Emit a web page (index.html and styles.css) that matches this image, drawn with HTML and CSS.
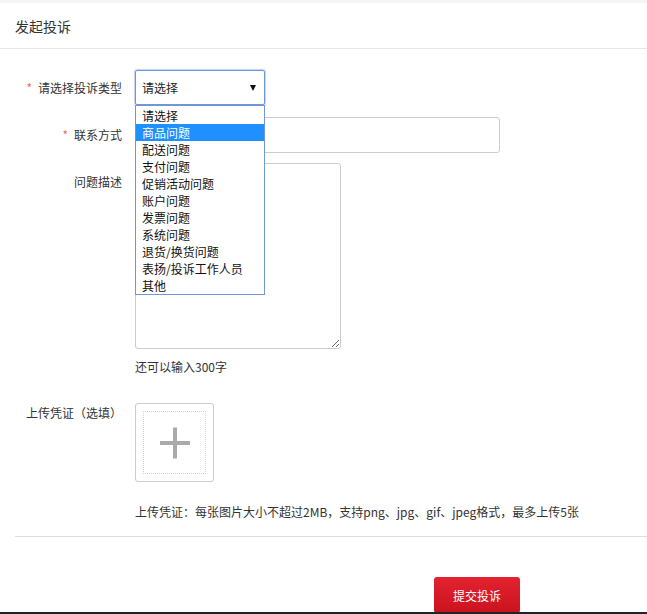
FILE: index.html
```html
<!DOCTYPE html>
<html lang="zh-CN">
<head>
<meta charset="utf-8">
<title>发起投诉</title>
<link rel="stylesheet" href="styles.css">
</head>
<body>
<div class="topbar"></div>
<div class="header">发起投诉</div>
<form class="form">
  <div class="row row-type">
    <label class="label"><span class="req">*</span>请选择投诉类型</label>
    <div class="select-wrap">
      <div class="select">
        <span class="select-text">请选择</span>
        <span class="arrow"></span>
      </div>
      <ul class="dropdown">
        <li>请选择</li>
        <li class="active">商品问题</li>
        <li>配送问题</li>
        <li>支付问题</li>
        <li>促销活动问题</li>
        <li>账户问题</li>
        <li>发票问题</li>
        <li>系统问题</li>
        <li>退货/换货问题</li>
        <li>表扬/投诉工作人员</li>
        <li>其他</li>
      </ul>
    </div>
  </div>
  <div class="row row-contact">
    <label class="label"><span class="req">*</span>联系方式</label>
    <input class="input" type="text">
  </div>
  <div class="row row-desc">
    <label class="label">问题描述</label>
    <div class="desc">
      <textarea class="textarea"></textarea>
      <div class="counter">还可以输入300字</div>
    </div>
  </div>
  <div class="row row-upload">
    <label class="label label-upload">上传凭证（选填）</label>
    <div class="upload">
      <div class="upload-inner">
        <span class="plus-h"></span>
        <span class="plus-v"></span>
      </div>
    </div>
  </div>
  <div class="hint">上传凭证：每张图片大小不超过2MB，支持png、jpg、gif、jpeg格式，最多上传5张</div>
</form>
<div class="divider"></div>
<div class="actions">
  <button class="submit" type="button">提交投诉</button>
</div>
<div class="screen-edge"></div>
</body>
</html>
```

FILE: styles.css
```css
* { box-sizing: border-box; }

html, body {
  margin: 0;
  padding: 0;
  background: #fff;
}

body {
  font-family: "Noto Sans CJK SC", "Noto Sans", "Liberation Sans", sans-serif;
  font-size: 12px;
  color: #333;
  overflow: hidden;
  height: 614px;
}

.topbar {
  height: 3px;
  background: #f5f5f5;
}

.header {
  height: 46px;
  line-height: 46px;
  padding-left: 15px;
  font-size: 14px;
  color: #333;
  border-bottom: 1px solid #e8e8e8;
}

.form {
  padding-top: 21px;
}

.row {
  display: grid;
  grid-template-columns: 122px auto;
  column-gap: 13px;
  align-items: start;
}

.label {
  text-align: right;
  color: #333;
  font-size: 12px;
  white-space: nowrap;
}

.req {
  color: #f06a5a;
  margin-right: 6px;
}

.row-type .label { line-height: 35px; }
.row-contact { margin-top: 12px; }
.row-contact .label { line-height: 36px; }
.row-desc { margin-top: 10px; }
.row-desc .label { line-height: 38px; }
.row-upload { margin-top: 27px; }
.row-upload .label { line-height: 20px; }

.select-wrap {
  position: relative;
  width: 130px;
}

.select {
  height: 35px;
  width: 130px;
  border: 1px solid #6f96d8;
  border-radius: 2px;
  box-shadow: 0 0 1px 1px rgba(120, 160, 225, 0.45);
  display: flex;
  align-items: center;
  padding-left: 6px;
  padding-right: 8px;
  justify-content: space-between;
  color: #222;
}

.select-text { line-height: 18px; }

.arrow {
  width: 0;
  height: 0;
  border-left: 3.5px solid transparent;
  border-right: 3.5px solid transparent;
  border-top: 6px solid #111;
  margin-top: 1px;
}

.dropdown {
  position: absolute;
  top: 35px;
  left: 0;
  width: 130px;
  margin: 0;
  padding: 1px 0 0;
  list-style: none;
  background: #fff;
  border: 1px solid #7096d6;
  z-index: 5;
}

.dropdown li {
  height: 17px;
  line-height: 17px;
  padding-left: 6px;
  color: #111;
  font-size: 12px;
  white-space: nowrap;
}

.dropdown li.active {
  background: #1e90ff;
  color: #fff;
}

.input {
  width: 365px;
  height: 36px;
  border: 1px solid #ccc;
  border-radius: 3px;
  margin: 0;
  padding: 0 8px;
  font: inherit;
  outline: none;
}

.desc {
  display: flex;
  flex-direction: column;
}

.textarea {
  width: 206px;
  height: 186px;
  border: 1px solid #ccc;
  border-radius: 3px;
  margin: 0;
  padding: 6px;
  font: inherit;
  resize: both;
  outline: none;
  display: block;
}

.counter {
  margin-top: 9px;
  line-height: 18px;
  color: #333;
}

.upload {
  width: 79px;
  height: 79px;
  border: 1px solid #ccc;
  border-radius: 3px;
  padding: 7px;
}

.upload-inner {
  position: relative;
  width: 100%;
  height: 100%;
  border: 1px dotted #d4d4d4;
}

.plus-h,
.plus-v {
  position: absolute;
  background: #aaa;
  left: 50%;
  top: 50%;
}

.plus-h {
  width: 30px;
  height: 4px;
  transform: translate(-50%, -50%);
}

.plus-v {
  width: 4px;
  height: 31px;
  transform: translate(-50%, -50%);
}

.hint {
  margin-top: 21px;
  margin-left: 135px;
  line-height: 18px;
  color: #333;
  white-space: nowrap;
}

.divider {
  margin-top: 15px;
  margin-left: 15px;
  border-top: 1px solid #ddd;
}

.actions {
  padding-top: 40px;
  padding-left: 434px;
}

.submit {
  width: 86px;
  height: 36px;
  border: none;
  border-radius: 3px;
  background: linear-gradient(#e3222f, #c9141f);
  color: #fff;
  font: inherit;
  font-size: 12px;
  padding: 0;
  display: block;
}

.screen-edge {
  position: fixed;
  left: 0;
  right: 0;
  bottom: 0;
  height: 2px;
  background: #1f2426;
  z-index: 10;
}
```
